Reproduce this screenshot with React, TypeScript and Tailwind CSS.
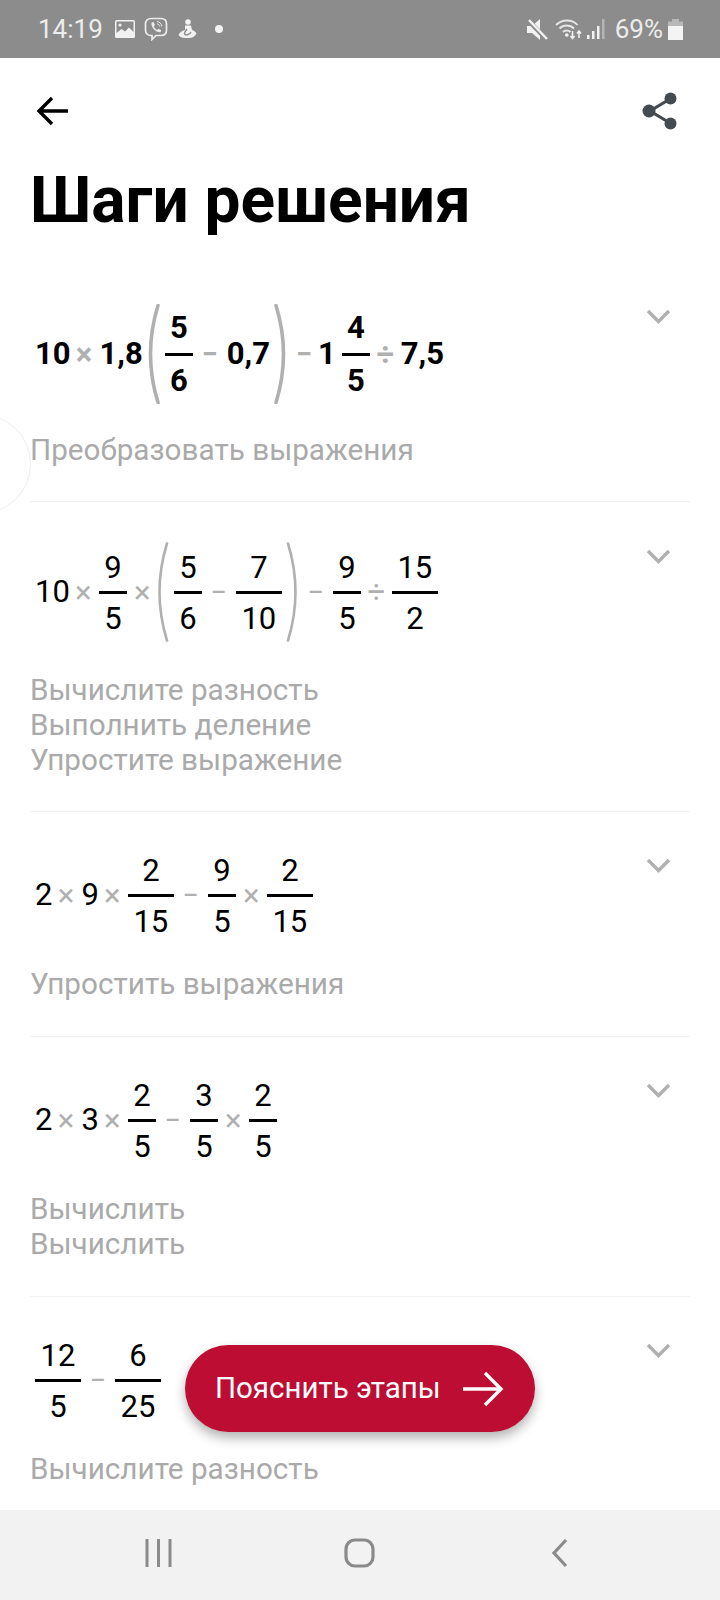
import { ReactNode } from "react";

const Frac = ({ n, d, wide, bold }: { n: string; d: string; wide?: boolean; bold?: boolean }) => (
  <div className={`flex flex-col items-center ${wide ? "w-[46px]" : "w-[28px]"} ${bold ? "font-bold" : "pt-[2px]"}`}>
    <span className={`leading-[38px] ${bold ? "mb-[6px]" : "mb-[4px]"}`}>{n}</span>
    <span className={`h-[3px] bg-black ${wide ? "w-[46px]" : "w-[28px]"}`} />
    <span className="leading-[38px] mt-[6px]">{d}</span>
  </div>
);

const Op = ({ c, bold }: { c: string; bold?: boolean }) => (
  <span
    className={`flex justify-center text-[#b0b0b0] leading-none ${
      c === "−" ? "w-[18px] text-[29px]" : "w-[15px] text-[31px]"
    } ${bold ? "font-bold" : ""}`}
  >
    {c}
  </span>
);

// a bare number sits a little closer to what follows it
const Num = ({ children }: { children: ReactNode }) => <span className="mr-[-2px]">{children}</span>;

const Paren = ({ right, bold }: { right?: boolean; bold?: boolean }) => (
  <svg
    width="13"
    height="100"
    viewBox="0 0 13 100"
    fill="none"
    className={right ? "ml-[-4px]" : "mr-[-3px] ml-[-2px]"}
  >
    <path
      d={right ? "M2 1.5 Q17 50 2 98.5" : "M11 1.5 Q-4 50 11 98.5"}
      stroke="#b0b0b0"
      strokeWidth={bold ? 3.6 : 2.6}
      strokeLinecap="round"
    />
  </svg>
);

const Chevron = ({ className }: { className: string }) => (
  <svg width="25" height="15" viewBox="0 0 25 15" fill="none" className={`mr-[19px] shrink-0 ${className}`}>
    <path d="M2 2 L12.5 12.5 L23 2" stroke="#b0b0b0" strokeWidth="3.4" />
  </svg>
);

interface RowProps {
  tall?: boolean;
  bold?: boolean;
  labels: string[];
  children: ReactNode;
  last?: boolean;
}

const Row = ({ tall, bold, labels, children, last }: RowProps) => (
  <div className={`mx-[30px] pt-10 ${tall ? "pb-[34px]" : "pb-[35px]"} ${last ? "" : "border-b border-[#f1f1f1]"}`}>
    <div className={`flex justify-between items-start ${bold ? "mb-[28px]" : tall ? "mb-[30px]" : "mb-[27px]"}`}>
      <div
        className={`flex items-center gap-2 pl-[5px] text-[31px] text-black ${tall ? "h-[100px]" : "h-[87px]"} ${
          bold ? "font-bold" : ""
        }`}
      >
        {children}
      </div>
      <Chevron className={bold ? "mt-[5px]" : tall ? "mt-[7px]" : "mt-[6px]"} />
    </div>
    <div className="text-[29.7px] leading-[35px] text-[#aaaaaa]">
      {labels.map((l, i) => (
        <div key={i}>{l}</div>
      ))}
    </div>
  </div>
);

const StatusBar = () => (
  <div className="h-[58px] shrink-0 bg-[#8c8c8c] flex items-center justify-between pl-[38px] pr-[37px] text-[26px] text-[#ececec]">
    <div className="flex items-center">
      <span>14:19</span>
      {/* picture */}
      <svg width="20" height="18" viewBox="0 0 20 18" className="ml-[12px]">
        <rect width="20" height="18" rx="1.5" fill="#f2f2f2" />
        <path d="M1.5 1.5H18.5V12L14 7.5 10 11.5 6.5 9 1.5 13Z" fill="#8c8c8c" />
        <circle cx="5" cy="5" r="1.6" fill="#f2f2f2" />
      </svg>
      {/* viber */}
      <svg width="24" height="24" viewBox="0 0 24 24" fill="none" className="ml-[9px]">
        <path
          d="M7 1.5H17C20.3 1.5 22.5 3.7 22.5 7V13C22.5 16.3 20.3 18.5 17 18.5H12L8 22.5V18.5H7C3.7 18.5 1.5 16.3 1.5 13V7C1.5 3.7 3.7 1.5 7 1.5Z"
          stroke="#ececec"
          strokeWidth="1.7"
        />
        <path
          d="M7.5 5.5L9.5 5L11 8L9.8 9.3C10.5 11 11.6 12.2 13.3 13L14.6 11.8L17.2 13.3L16.6 15.2C13 16.2 6.5 10.5 7.5 5.5Z"
          fill="#ececec"
        />
        <path d="M13 4.5C15.6 4.7 17.6 6.7 17.8 9.5M13 6.8C14.4 7 15.4 8 15.6 9.5" stroke="#ececec" strokeWidth="1" />
      </svg>
      {/* figure */}
      <svg width="19" height="20" viewBox="0 0 19 20" className="ml-[10px]">
        <circle cx="10" cy="3" r="2.8" fill="#f2f2f2" />
        <path
          d="M7 6.5H13L14 11C16 11.5 18 13 18.5 14.5C17 17.5 14 19 11 19H7C4 19 2 18 .5 16C1.5 13.5 4 11.5 7 11Z"
          fill="#f2f2f2"
        />
        <path d="M9 10C7.5 12 5.5 14.5 7 15.5C9 16.5 12 15 13 13" stroke="#8c8c8c" strokeWidth="1.4" fill="none" />
      </svg>
      <span className="ml-[18px] w-[8px] h-[8px] rounded-full bg-[#f2f2f2]" />
    </div>
    <div className="flex items-center">
      {/* muted */}
      <svg width="21" height="21" viewBox="0 0 21 21" fill="none">
        <path d="M0 7H5L13 0V21L5 14H0Z" fill="#f2f2f2" />
        <path d="M1 1L19 20" stroke="#8c8c8c" strokeWidth="4.5" />
        <path d="M2 1L20 20" stroke="#f2f2f2" strokeWidth="2.4" />
      </svg>
      {/* wifi */}
      <svg width="27" height="22" viewBox="0 0 27 22" fill="none" className="ml-[7px]">
        <path d="M1 7C7 1 17 1 22.5 7" stroke="#e6e6e6" strokeWidth="1.8" />
        <path d="M4.5 10.5C8.5 6.5 15 6.5 19 10.5" stroke="#e6e6e6" strokeWidth="1.8" />
        <path d="M8 14C10 12 13.5 12 15.5 14" stroke="#e6e6e6" strokeWidth="1.8" />
        <circle cx="11.8" cy="17" r="1.8" fill="#f2f2f2" />
        <path d="M17.5 13V20M15.5 18L17.5 20.5 19.5 18" stroke="#f2f2f2" strokeWidth="1.5" />
        <path d="M24 20V13M22 15.5L24 13 26 15.5" stroke="#f2f2f2" strokeWidth="1.5" />
      </svg>
      {/* signal */}
      <svg width="18" height="20" viewBox="0 0 18 20" className="ml-[5px]">
        <rect x="0" y="16" width="2.5" height="4" fill="#f2f2f2" />
        <rect x="5" y="12" width="2.5" height="8" fill="#f2f2f2" />
        <rect x="10" y="7" width="2.5" height="13" fill="#f2f2f2" />
        <rect x="15" y="0" width="2.5" height="20" fill="#b4b4b4" />
      </svg>
      <span className="ml-[10px]">69%</span>
      {/* battery */}
      <svg width="15" height="21" viewBox="0 0 15 21" className="ml-[5px]">
        <path d="M4 0H11V2.5H15V21H0V2.5H4Z" fill="#b8b8b8" />
        <rect x="0" y="7" width="15" height="14" fill="#f4f4f4" />
      </svg>
    </div>
  </div>
);

const NavBar = () => (
  <div className="h-[90px] shrink-0 bg-[#f2f2f2] flex items-start pt-[28px] pl-[144px]">
    <svg width="30" height="30" viewBox="0 0 30 30" fill="none" stroke="#8a8a8a" strokeWidth="3">
      <path d="M3 1V29M14.5 1V29M26 1V29" />
    </svg>
    <svg width="32" height="30" viewBox="0 0 32 30" fill="none" stroke="#8a8a8a" strokeWidth="3.2" className="ml-[170px]">
      <rect x="2" y="2" width="27" height="26" rx="9" />
    </svg>
    <svg width="18" height="30" viewBox="0 0 18 30" fill="none" stroke="#8a8a8a" strokeWidth="3.2" className="ml-[175px]">
      <path d="M15 2L3 15 15 28" />
    </svg>
  </div>
);

export default function App() {
  return (
    <div className="relative w-[720px] h-[1600px] flex flex-col overflow-hidden bg-white font-[Roboto,sans-serif]">
      <StatusBar />

      <div className="flex-1 min-h-0 overflow-hidden">
        <div className="h-[106px] flex items-center justify-between pl-[36px] pr-[42px]">
          <svg width="34" height="30" viewBox="0 0 34 30" fill="none" stroke="#000" strokeWidth="3.4">
            <path d="M32 15H3M16 2L3 15 16 28" />
          </svg>
          <svg width="36" height="38" viewBox="0 0 36 38" fill="none">
            <path d="M28 7L8 19 28 31" stroke="#444a50" strokeWidth="3.2" />
            <circle cx="28.5" cy="6.5" r="6" fill="#444a50" />
            <circle cx="7" cy="19" r="6.5" fill="#444a50" />
            <circle cx="28.5" cy="31.5" r="6" fill="#444a50" />
          </svg>
        </div>
        <h1 className="pl-[30px] text-[64px] leading-[74px] font-bold text-black mb-[26px]">Шаги решения</h1>

        <Row tall bold labels={["Преобразовать выражения"]}>
          <Num>10</Num>
          <Op c="×" bold />
          <Num>1,8</Num>
          <Paren bold />
          <Frac n="5" d="6" bold />
          <Op c="−" bold />
          <span>0,7</span>
          <Paren right bold />
          <Op c="−" bold />
          <span className="ml-[-3px] mr-[-2px]">1</span>
          <Frac n="4" d="5" bold />
          <Op c="÷" bold />
          <span>7,5</span>
        </Row>

        <Row tall labels={["Вычислите разность", "Выполнить деление", "Упростите выражение"]}>
          <Num>10</Num>
          <Op c="×" />
          <Frac n="9" d="5" />
          <Op c="×" />
          <Paren />
          <Frac n="5" d="6" />
          <Op c="−" />
          <Frac n="7" d="10" wide />
          <Paren right />
          <Op c="−" />
          <Frac n="9" d="5" />
          <Op c="÷" />
          <Frac n="15" d="2" wide />
        </Row>

        <Row labels={["Упростить выражения"]}>
          <Num>2</Num>
          <Op c="×" />
          <Num>9</Num>
          <Op c="×" />
          <Frac n="2" d="15" wide />
          <Op c="−" />
          <Frac n="9" d="5" />
          <Op c="×" />
          <Frac n="2" d="15" wide />
        </Row>

        <Row labels={["Вычислить", "Вычислить"]}>
          <Num>2</Num>
          <Op c="×" />
          <Num>3</Num>
          <Op c="×" />
          <Frac n="2" d="5" />
          <Op c="−" />
          <Frac n="3" d="5" />
          <Op c="×" />
          <Frac n="2" d="5" />
        </Row>

        <Row last labels={["Вычислите разность"]}>
          <Frac n="12" d="5" wide />
          <Op c="−" />
          <Frac n="6" d="25" wide />
        </Row>
      </div>

      <NavBar />

      {/* half hidden circle at the left edge */}
      <div className="absolute left-[-69px] top-[414px] w-[100px] h-[100px] rounded-full border border-[#ececec]" />

      <button className="absolute left-[185px] top-[1345px] w-[350px] h-[87px] rounded-full bg-[#bd0d33] shadow-[0_6px_12px_rgba(0,0,0,0.3)] flex items-center pl-[30px] text-[29.5px] text-white">
        Пояснить этапы
        <svg width="42" height="36" viewBox="0 0 42 36" fill="none" stroke="#fff" strokeWidth="3.4" className="ml-[21px]">
          <path d="M1 18H39M23 2L39 18 23 34" />
        </svg>
      </button>
    </div>
  );
}
